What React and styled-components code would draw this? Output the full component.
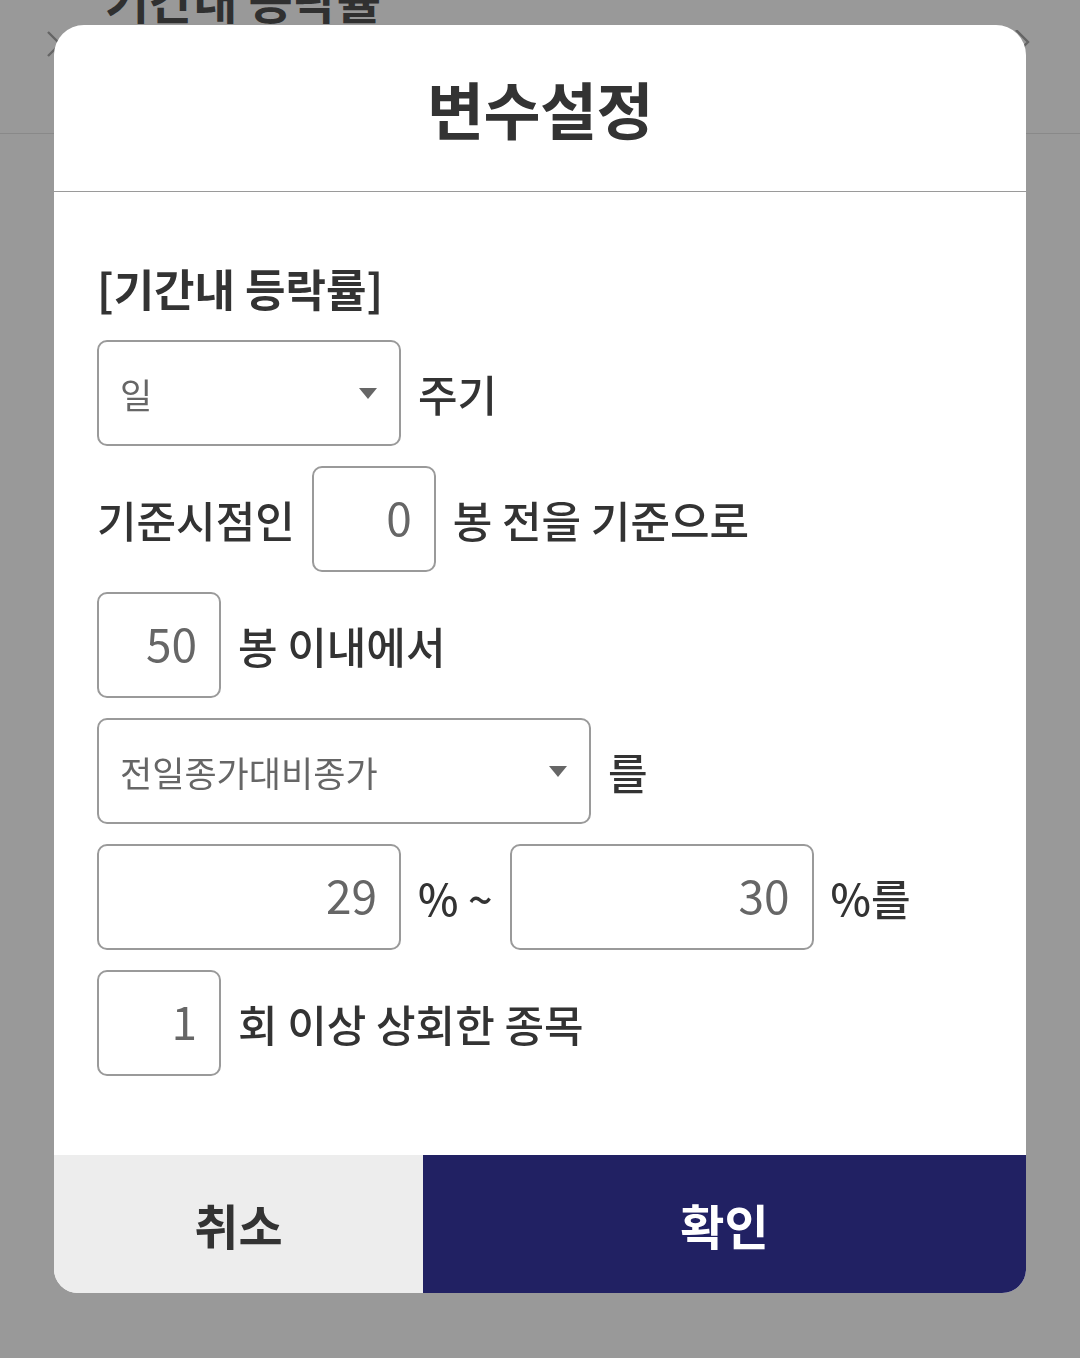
import React from 'react';
import styled, { createGlobalStyle } from 'styled-components';

const GlobalStyle = createGlobalStyle`
  html, body {
    margin: 0;
    padding: 0;
    background: #ffffff;
    font-family: "Noto Sans CJK KR", "Noto Sans", sans-serif;
  }
`;

const Page = styled.div`
  width: 1080px;
  height: 1358px;
  background: #ffffff;
  overflow: hidden;
`;

const PageHeader = styled.div`
  height: 134px;
  border-bottom: 1px solid #e4e4e4;
  display: flex;
  align-items: flex-start;
  justify-content: space-between;
  padding: 0 44px 0 46px;
  box-sizing: border-box;
`;

const PageTitle = styled.h1`
  margin: -38px 0 0 0;
  flex: 1;
  padding-left: 31px;
  font-size: 48px;
  font-weight: 700;
  line-height: 72px;
  color: #505050;
`;

const NavIcon = styled.svg`
  margin-top: 30px;
  width: 28px;
  height: 28px;
  stroke: #a8a8a8;
  stroke-width: 2.4;
  fill: none;
`;

const Overlay = styled.div`
  position: fixed;
  inset: 0;
  background: rgba(0, 0, 0, 0.4);
  display: flex;
  justify-content: center;
  align-items: flex-start;
  padding-top: 25px;
`;

const Modal = styled.div`
  width: 972px;
  background: #ffffff;
  border-radius: 30px 30px 24px 24px;
  overflow: hidden;
  display: flex;
  flex-direction: column;
`;

const ModalHeader = styled.div`
  height: 166px;
  border-bottom: 1px solid #9a9a9a;
  display: flex;
  align-items: center;
  justify-content: center;
`;

const ModalTitle = styled.h2`
  margin: 0;
  font-size: 62px;
  font-weight: 700;
  color: #333333;
  letter-spacing: -0.5px;
`;

const Body = styled.div`
  padding: 64px 43px 79px;
  display: flex;
  flex-direction: column;
  gap: 20px;
`;

const SectionLabel = styled.div`
  font-size: 44px;
  font-weight: 700;
  line-height: 64px;
  color: #333333;
`;

const Row = styled.div`
  display: flex;
  align-items: center;
  gap: 17px;
  height: 106px;
`;

const Label = styled.span`
  font-size: 43px;
  font-weight: 500;
  color: #333333;
  white-space: pre;
`;

const Box = styled.div`
  box-sizing: border-box;
  width: ${(p) => p.$w}px;
  height: 106px;
  border: 2px solid #9a9a9a;
  border-radius: 10px;
  display: flex;
  align-items: center;
  color: #666666;
`;

const SelectBox = styled(Box)`
  justify-content: space-between;
  padding: 0 22px 0 21px;
  font-size: 35px;
`;

const Caret = styled.span`
  width: 0;
  height: 0;
  border-left: 9px solid transparent;
  border-right: 9px solid transparent;
  border-top: 11px solid #666666;
`;

const NumberBox = styled(Box)`
  justify-content: flex-end;
  padding: 0 22px 6px 0;
  font-size: 46px;
  font-weight: 400;
`;

const Footer = styled.div`
  display: flex;
  height: 138px;
`;

const FooterButton = styled.button`
  border: none;
  margin: 0;
  padding: 0;
  font-family: inherit;
  font-size: 48px;
  font-weight: 700;
  width: ${(p) => (p.$primary ? 603 : 369)}px;
  background: ${(p) => (p.$primary ? '#212163' : '#ededed')};
  color: ${(p) => (p.$primary ? '#ffffff' : '#333333')};
`;

const Select = ({ width, value }) => (
  <SelectBox $w={width}>
    <span>{value}</span>
    <Caret />
  </SelectBox>
);

export default function App() {
  return (
    <Page>
      <GlobalStyle />
      <PageHeader>
        <NavIcon viewBox="0 0 28 28">
          <path d="M2 2 L26 26 M26 2 L2 26" />
        </NavIcon>
        <PageTitle>기간내 등락률</PageTitle>
        <NavIcon viewBox="0 0 28 28">
          <path d="M8 0 L20 12 L8 24" />
        </NavIcon>
      </PageHeader>

      <Overlay>
        <Modal>
          <ModalHeader>
            <ModalTitle>변수설정</ModalTitle>
          </ModalHeader>
          <Body>
            <SectionLabel>[기간내 등락률]</SectionLabel>
            <Row>
              <Select width={304} value="일" />
              <Label>주기</Label>
            </Row>
            <Row>
              <Label>기준시점인</Label>
              <NumberBox $w={124}>0</NumberBox>
              <Label>봉 전을 기준으로</Label>
            </Row>
            <Row>
              <NumberBox $w={124}>50</NumberBox>
              <Label>봉 이내에서</Label>
            </Row>
            <Row>
              <Select width={494} value="전일종가대비종가" />
              <Label>를</Label>
            </Row>
            <Row>
              <NumberBox $w={304}>29</NumberBox>
              <Label>% ~</Label>
              <NumberBox $w={304}>30</NumberBox>
              <Label>%를</Label>
            </Row>
            <Row>
              <NumberBox $w={124}>1</NumberBox>
              <Label>회 이상 상회한 종목</Label>
            </Row>
          </Body>
          <Footer>
            <FooterButton>취소</FooterButton>
            <FooterButton $primary>확인</FooterButton>
          </Footer>
        </Modal>
      </Overlay>
    </Page>
  );
}
